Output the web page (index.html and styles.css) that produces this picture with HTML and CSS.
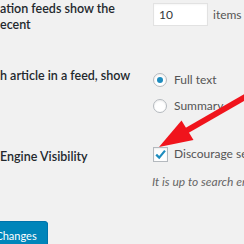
FILE: index.html
```html
<!DOCTYPE html>
<html>
<head>
<meta charset="utf-8">
<link rel="stylesheet" href="styles.css">
</head>
<body>
<div class="page">
  <div class="table">
    <div class="row row-feeds">
      <div class="label">ation feeds show the<br>ecent</div>
      <div class="field">
        <span class="input">10</span><span class="unit">items</span>
      </div>
    </div>
    <div class="row row-article">
      <div class="label">h article in a feed, show</div>
      <div class="field options">
        <label class="opt"><span class="radio checked"></span>Full text</label>
        <label class="opt"><span class="radio"></span>Summary</label>
      </div>
    </div>
    <div class="row row-search">
      <div class="label">Engine Visibility</div>
      <div class="field">
        <label class="opt"><span class="check"><svg viewBox="0 0 15 15" width="15" height="15"><path d="M3.2 7.6 L6.2 10.6 L12 3.6" fill="none" stroke="#1e8cbe" stroke-width="2.2"/></svg></span>Discourage search engines from indexing this site</label>
        <p class="desc">It is up to search engines to honor this request.</p>
      </div>
    </div>
  </div>
  <div class="submit"><span class="button">Save Changes</span></div>
  <svg class="arrow" width="244" height="244" viewBox="0 0 244 244">
    <line x1="252" y1="93" x2="186" y2="131" stroke="#f0141c" stroke-width="6"/>
    <polygon points="159,147 181.5,120.5 193.5,140" fill="#f0141c"/>
  </svg>
</div>
</body>
</html>
```
FILE: styles.css
```css
html, body {
  margin: 0;
  padding: 0;
  background: #f1f1f1;
  overflow: hidden;
}
.page {
  position: relative;
  width: 244px;
  height: 244px;
  overflow: hidden;
  font-family: Lato, "Open Sans", sans-serif;
  font-size: 12px;
  color: #444;
}
.table {
  display: flex;
  flex-direction: column;
}
.row {
  display: grid;
  grid-template-columns: 152px 200px;
}
.label {
  font-size: 12.5px;
  font-weight: 600;
  color: #23282d;
  line-height: 16px;
  white-space: nowrap;
}
.row-feeds { height: 62px; }
.row-feeds .label { padding-top: 1px; }
.row-feeds .field {
  display: flex;
  align-items: center;
  height: 23px;
  padding-top: 3px;
}
.input {
  box-sizing: border-box;
  width: 55px;
  height: 23px;
  margin-left: 1px;
  background: #fff;
  border: 1px solid #e2e2e2;
  box-shadow: inset 0 1px 2px rgba(0,0,0,0.04);
  padding: 2px 5px;
  line-height: 17px;
  color: #32373c;
}
.unit { margin-left: 5px; color: #555; }
.row-article { height: 78px; }
.row-article .label { padding-top: 6px; }
.options { display: flex; flex-direction: column; gap: 10px; padding-top: 10px; }
.opt {
  display: flex;
  align-items: center;
  gap: 6px;
  white-space: nowrap;
  line-height: 16px;
  color: #555;
}
.options .opt { gap: 7px; }
.radio {
  box-sizing: border-box;
  width: 14px;
  height: 14px;
  margin-left: 1px;
  border: 1px solid #b4b9be;
  border-radius: 50%;
  background: #fff;
  box-shadow: inset 0 1px 2px rgba(0,0,0,0.08);
  display: flex;
  align-items: center;
  justify-content: center;
}
.radio.checked::after {
  content: "";
  width: 6px;
  height: 6px;
  border-radius: 50%;
  background: #1e8cbe;
}
.row-search .label { padding-top: 9px; }
.row-search .field { padding-top: 6px; }
.check {
  box-sizing: border-box;
  width: 15px;
  height: 15px;
  border: 1px solid #b4b9be;
  background: #fff;
  box-shadow: inset 0 1px 2px rgba(0,0,0,0.08);
  display: flex;
  margin-left: 1px;
}
.check svg { margin: -1px; }
.desc {
  margin: 12px 0 0;
  font-style: italic;
  color: #666;
  white-space: nowrap;
  line-height: 16px;
}
.submit {
  margin-top: 31px;
  display: flex;
}
.button {
  margin-left: -41px;
  font-size: 11px;
  background: #0085ba;
  border: 1px solid #0073aa;
  border-radius: 3px;
  color: #fff;
  padding: 5px 10px;
  line-height: 17px;
  white-space: nowrap;
  box-shadow: 0 1px 0 #006799;
}
.arrow {
  position: absolute;
  left: 0;
  top: 0;
  pointer-events: none;
}
```
